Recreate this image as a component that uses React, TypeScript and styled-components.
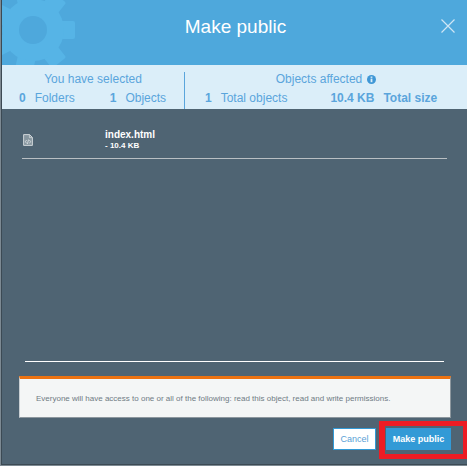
import styled, { createGlobalStyle } from 'styled-components';

const GlobalStyle = createGlobalStyle`
  html, body {
    margin: 0;
    padding: 0;
    background: #7d8a93;
  }
`;

const Modal = styled.div`
  width: 466px;
  height: 465px;
  margin-left: 1px;
  box-sizing: border-box;
  display: flex;
  flex-direction: column;
  background: #4f6473;
  border-left: 1px solid #3c4a54;
  border-bottom: 1px solid #3c4a54;
  font-family: 'Liberation Sans', Arial, sans-serif;
  overflow: hidden;
`;

const Header = styled.header`
  position: relative;
  height: 65px;
  flex: none;
  display: flex;
  align-items: flex-start;
  justify-content: center;
  background: #4ea8dc;
  overflow: hidden;
`;

const Gear = styled.svg`
  position: absolute;
  left: -2px;
  top: 0;
  width: 80px;
  height: 65px;
`;

const Title = styled.h1`
  margin: 15px 0 0 2px;
  font-size: 19px;
  font-weight: 400;
  line-height: 24px;
  color: #fff;
`;

const CloseIcon = styled.svg`
  position: absolute;
  right: 12px;
  top: 19px;
  width: 14px;
  height: 14px;
`;

const Summary = styled.section`
  height: 44px;
  flex: none;
  display: flex;
  background: #dbeef9;
  color: #5aa5dc;
  font-size: 12px;
`;

const Group = styled.div<{ $width: number }>`
  width: ${(p) => p.$width}px;
  flex: none;
  padding-top: 7px;
  box-sizing: border-box;
`;

const Divider = styled.div`
  width: 1px;
  height: 37px;
  margin-top: 7px;
  background: #5aa5dc;
  flex: none;
`;

const Caption = styled.div`
  display: flex;
  align-items: center;
  justify-content: center;
  gap: 5px;
  height: 14px;
  line-height: 14px;
`;

const Stats = styled.div`
  display: flex;
  margin-top: 5px;
  line-height: 14px;
  height: 14px;
`;

const Value = styled.b<{ $gap: number; $left: number }>`
  margin-left: ${(p) => p.$left}px;
  margin-right: ${(p) => p.$gap}px;
`;

const Label = styled.span<{ $bold?: boolean }>`
  font-weight: ${(p) => (p.$bold ? 700 : 400)};
`;

const Files = styled.div`
  flex: 1;
  margin: 0 20px 0 20px;
  display: flex;
  flex-direction: column;
  justify-content: space-between;
`;

const FileRow = styled.div`
  height: 49px;
  display: flex;
  border-bottom: 1px solid #b9bfc3;
`;

const FileIcon = styled.svg`
  width: 10px;
  height: 12px;
  margin: 25px 0 0 1px;
  flex: none;
`;

const FileText = styled.div`
  margin-left: 72px;
  padding-top: 20px;
  color: #fff;
`;

const FileName = styled.div`
  font-size: 10px;
  line-height: 12px;
  font-weight: 700;
`;

const FileSize = styled.div`
  font-size: 8px;
  line-height: 10px;
  font-weight: 700;
`;

const ListEnd = styled.div`
  height: 1px;
  background: #fff;
  margin: 0 3px 14px;
`;

const Notice = styled.div`
  flex: none;
  height: 42px;
  box-sizing: border-box;
  margin: 0 16px 0 17px;
  padding-left: 16px;
  display: flex;
  align-items: center;
  background: #f4f6f6;
  border-top: 3px solid #ec7211;
  border-right: 1px solid #8d979e;
  border-bottom: 1px solid #8d979e;
  border-left: 1px solid #c9cfd3;
  font-size: 8px;
  color: #6f7b84;
`;

const Footer = styled.footer`
  flex: none;
  height: 46px;
  padding: 10px 16px 0 0;
  box-sizing: border-box;
  display: flex;
  justify-content: flex-end;
  gap: 10px;
  align-items: flex-start;
`;

const Button = styled.button<{ $primary?: boolean }>`
  height: 22px;
  padding: 0;
  box-sizing: border-box;
  width: ${(p) => (p.$primary ? 65 : 43)}px;
  font-family: inherit;
  font-size: 9px;
  font-weight: ${(p) => (p.$primary ? 700 : 400)};
  color: ${(p) => (p.$primary ? '#fff' : '#5a9fd6')};
  background: ${(p) => (p.$primary ? '#329ad6' : '#fff')};
  border: ${(p) => (p.$primary ? 'none' : '1px solid #329ad6')};
`;

const Highlight = styled.div`
  position: absolute;
  left: 379px;
  top: 421px;
  width: 88px;
  height: 38px;
  box-sizing: border-box;
  border-style: solid;
  border-color: #ed1c24;
  border-width: 5px 4px 5px 6px;
  pointer-events: none;
`;

const teeth = [0, 1, 2, 3, 4, 5, 6].map((i) => (i * 360) / 7);

export default function App() {
  return (
    <>
      <GlobalStyle />
      <Modal>
        <Header>
          <Gear viewBox="0 0 80 65">
            {teeth.map((a) => (
              <rect key={a} x="58" y="21" width="17" height="18" rx="2" fill="#56b4e6" transform={`rotate(${a} 33 30)`} />
            ))}
            <circle cx="33" cy="30" r="31" fill="#56b4e6" />
            <circle cx="33" cy="30" r="14" fill="#4ea8dc" />
          </Gear>
          <Title>Make public</Title>
          <CloseIcon viewBox="0 0 14 14">
            <path d="M.5 .5 13.5 13.5M13.5 .5 .5 13.5" stroke="#cfe6f5" strokeWidth="1.2" fill="none" />
          </CloseIcon>
        </Header>
        <Summary>
          <Group $width={182}>
            <Caption>You have selected</Caption>
            <Stats>
              <Value $left={17} $gap={9}>0</Value>
              <Label>Folders</Label>
              <Value $left={35} $gap={9}>1</Value>
              <Label>Objects</Label>
            </Stats>
          </Group>
          <Divider />
          <Group $width={282}>
            <Caption>
              Objects affected
              <svg width="9" height="9" viewBox="0 0 10 10">
                <circle cx="5" cy="5" r="5" fill="#3f97d6" />
                <rect x="4" y="4" width="2" height="4" fill="#dbeef9" />
                <rect x="4" y="1.7" width="2" height="1.5" fill="#dbeef9" />
              </svg>
            </Caption>
            <Stats>
              <Value $left={20} $gap={9}>1</Value>
              <Label>Total objects</Label>
              <Value $left={43} $gap={9}>10.4 KB</Value>
              <Label $bold>Total size</Label>
            </Stats>
          </Group>
        </Summary>
        <Files>
          <FileRow>
            <FileIcon viewBox="0 0 10 12">
              <path d="M.6 .6h6l2.8 2.8v8H.6z" fill="#87969f" stroke="#ced4d8" strokeWidth="1" />
              <path d="M6.4 .6v3h3" fill="none" stroke="#ced4d8" strokeWidth=".8" />
              <path d="M3.6 6 2.4 7.7 3.6 9.4M6.4 6l1.2 1.7-1.2 1.7M5.6 5.5 4.4 10" stroke="#eef1f2" strokeWidth=".7" fill="none" />
            </FileIcon>
            <FileText>
              <FileName>index.html</FileName>
              <FileSize>- 10.4 KB</FileSize>
            </FileText>
          </FileRow>
          <ListEnd />
        </Files>
        <Notice>Everyone will have access to one or all of the following: read this object, read and write permissions.</Notice>
        <Footer>
          <Button>Cancel</Button>
          <Button $primary>Make public</Button>
        </Footer>
      </Modal>
      <Highlight />
    </>
  );
}
